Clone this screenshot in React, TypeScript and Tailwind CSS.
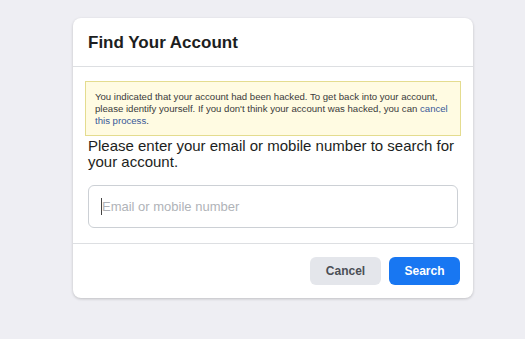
export default function App() {
  return (
    <div className="min-h-[339px] w-[525px] bg-[#eeeef3] pt-[18px] pl-[73px]" style={{ fontFamily: '"Liberation Sans", Arial, sans-serif' }}>
      <div className="w-[400px] rounded-[8px] bg-white shadow-[0_1px_3px_rgba(0,0,0,0.2)]">
        <div className="h-[49px] flex items-center px-[15px] border-b border-[#dddfe2]">
          <h2 className="text-[17px] font-bold text-[#1c1e21] leading-none">Find Your Account</h2>
        </div>
        <div className="px-[12px] pt-[14px] pb-[15px]">
          <div className="border border-[#e4dc8f] bg-[#fffbe2] pl-[9px] pr-[4px] pt-[9px] pb-[8px] text-[9.6px] leading-[12px] text-[#3a3a3a]">
            You indicated that your account had been hacked. To get back into your account, please identify yourself. If you don't think your account was hacked, you can <span className="text-[#385898]">cancel this process</span>.
          </div>
          <p className="mt-[2px] pl-[3px] pr-[1px] text-[15px] leading-[16px] text-[#1c1e21]">
            Please enter your email or mobile number to search for your account.
          </p>
          <div className="mt-[15px] mx-[3px] h-[43px] rounded-[6px] border border-[#ccd0d5] flex items-center px-[12px]">
            <span className="w-px h-[17px] bg-[#444]" />
            <span className="text-[13px] text-[#b0b3b8]">Email or mobile number</span>
          </div>
        </div>
        <div className="border-t border-[#dddfe2] h-[55px] flex items-center justify-end gap-[8px] px-[13px]">
          <button className="h-[28px] w-[71px] rounded-[6px] bg-[#e4e6eb] text-[12px] font-bold text-[#4b4f56]">Cancel</button>
          <button className="h-[28px] w-[71px] rounded-[6px] bg-[#1877f2] text-[12px] font-bold text-white">Search</button>
        </div>
      </div>
    </div>
  );
}
